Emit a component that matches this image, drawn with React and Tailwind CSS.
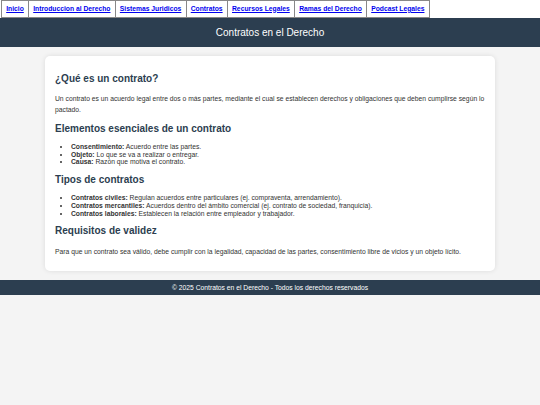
const links = [
  'Inicio',
  'Introduccion al Derecho',
  'Sistemas Juridicos',
  'Contratos',
  'Recursos Legales',
  'Ramas del Derecho',
  'Podcast Legales',
];

const h2 = 'text-[10px] font-bold text-[#2c3e50] leading-[12px]';
const para = 'text-[6.75px] leading-[11px]';
const list = 'list-disc pl-[16px] text-[6.75px] leading-[7.7px]';

export default function App() {
  return (
    <div className="min-h-[405px] bg-[#f4f4f4] text-[#333] font-['Liberation_Sans',Arial,sans-serif]">
      <nav className="bg-white">
        <ul className="flex pl-[1px]">
          {links.map((l) => (
            <li key={l} className="border border-[#888] -ml-px first:ml-0 h-[18px] flex items-center px-[4.2px] bg-white">
              <a href="#" className="text-[6.75px] font-bold text-[#0000ee] underline leading-none">
                {l}
              </a>
            </li>
          ))}
        </ul>
      </nav>

      <header className="bg-[#2c3e50] h-[29px] flex items-center justify-center">
        <h1 className="text-white text-[10px] font-normal">Contratos en el Derecho</h1>
      </header>

      <main className="w-[450px] mx-auto mt-[9px] bg-white rounded-[5px] shadow-[0_0_5px_rgba(0,0,0,0.1)] px-[10px] pt-[17px] pb-[14.5px]">
        <h2 className={h2}>¿Qué es un contrato?</h2>
        <p className={`${para} mt-[7.5px]`}>
          Un contrato es un acuerdo legal entre dos o más partes, mediante el cual se establecen derechos y obligaciones que deben cumplirse según lo pactado.
        </p>

        <h2 className={`${h2} mt-[8.5px]`}>Elementos esenciales de un contrato</h2>
        <ul className={`${list} mt-[8px]`}>
          <li><strong>Consentimiento:</strong> Acuerdo entre las partes.</li>
          <li><strong>Objeto:</strong> Lo que se va a realizar o entregar.</li>
          <li><strong>Causa:</strong> Razón que motiva el contrato.</li>
        </ul>

        <h2 className={`${h2} mt-[8px]`}>Tipos de contratos</h2>
        <ul className={`${list} mt-[8px]`}>
          <li><strong>Contratos civiles:</strong> Regulan acuerdos entre particulares (ej. compraventa, arrendamiento).</li>
          <li><strong>Contratos mercantiles:</strong> Acuerdos dentro del ámbito comercial (ej. contrato de sociedad, franquicia).</li>
          <li><strong>Contratos laborales:</strong> Establecen la relación entre empleador y trabajador.</li>
        </ul>

        <h2 className={`${h2} mt-[8px]`}>Requisitos de validez</h2>
        <p className={`${para} mt-[8.5px]`}>
          Para que un contrato sea válido, debe cumplir con la legalidad, capacidad de las partes, consentimiento libre de vicios y un objeto lícito.
        </p>
      </main>

      <footer className="bg-[#2c3e50] mt-[9px] h-[15px] flex items-center justify-center">
        <p className="text-white text-[6.75px]">© 2025 Contratos en el Derecho - Todos los derechos reservados</p>
      </footer>
    </div>
  );
}
